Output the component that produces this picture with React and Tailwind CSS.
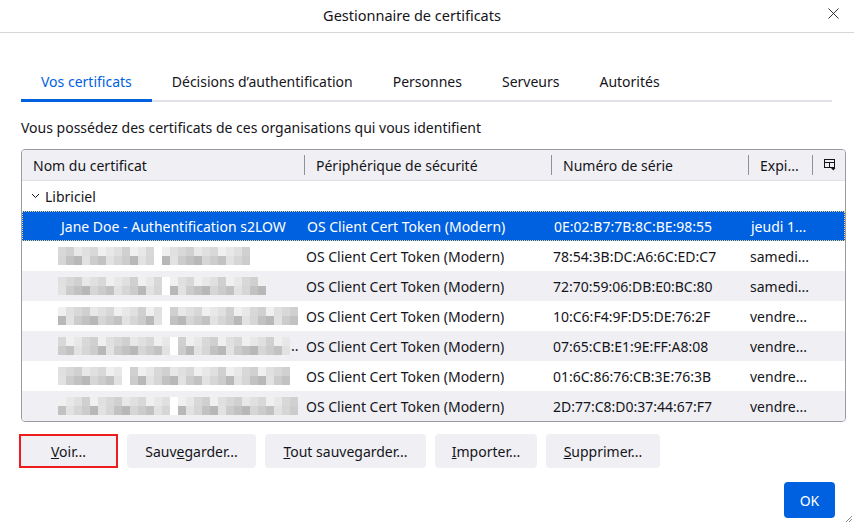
import { X } from "lucide-react"

const FONT = { fontFamily: '"Noto Sans", "Open Sans", sans-serif' }

const tabs = [
  "Vos certificats",
  "Décisions d’authentification",
  "Personnes",
  "Serveurs",
  "Autorités",
]

const rows = [
  { serial: "78:54:3B:DC:A6:6C:ED:C7", expires: "samedi...", width: 192, gap: 12, seed: 3 },
  { serial: "72:70:59:06:DB:E0:BC:80", expires: "samedi...", width: 208, gap: 13, seed: 7 },
  { serial: "10:C6:F4:9F:D5:DE:76:2F", expires: "vendre...", width: 240, gap: 13, seed: 11 },
  { serial: "07:65:CB:E1:9E:FF:A8:08", expires: "vendre...", width: 232, gap: 14, seed: 17, ellipsis: true },
  { serial: "01:6C:86:76:CB:3E:76:3B", expires: "vendre...", width: 232, gap: 8, seed: 23 },
  { serial: "2D:77:C8:D0:37:44:67:F7", expires: "vendre...", width: 240, gap: 14, seed: 29 },
]

const topShades = ["bg-[#f0f0f0]", "bg-[#e8e8e8]", "bg-[#e0e0e0]", "bg-[#d8d8d8]", "bg-[#d0d0d0]"]
const bottomShades = ["bg-[#e2e2e2]", "bg-[#d6d6d6]", "bg-[#cccccc]", "bg-[#c2c2c2]", "bg-[#b8b8b8]"]

// pixelated placeholder for a redacted certificate name
function Mosaic({ width, gap, seed }) {
  const cols = Math.floor(width / 8)
  return (
    <div className="flex flex-col">
      {[topShades, bottomShades].map((pal, r) => (
        <div key={r} className="flex h-[9px]">
          {Array.from({ length: cols }).map((_, c) => {
            const n = ((c + 5) * 31 + seed * 17 + r * 53) % 89
            const cls = c === gap ? "bg-white" : pal[n % pal.length]
            return <div key={c} className={`w-[8px] h-full ${cls}`} />
          })}
        </div>
      ))}
    </div>
  )
}

function HeaderCell({ children, width, last }) {
  return (
    <div className={`flex items-center h-full ${width}`}>
      <span className="pl-[11px] truncate flex-1">{children}</span>
      {!last && <span className="w-px h-[20px] bg-[#8f8f9d]" />}
    </div>
  )
}

function ColumnPicker() {
  return (
    <svg width="12" height="12" viewBox="0 0 12 12" fill="none" stroke="#15141a" strokeWidth="1">
      <rect x="0.5" y="0.5" width="10" height="8" />
      <line x1="0.5" y1="3.5" x2="10.5" y2="3.5" />
      <line x1="5.5" y1="3.5" x2="5.5" y2="8.5" />
      <path d="M7 9 L11.5 9 L9.25 11.5 Z" fill="#15141a" stroke="none" />
    </svg>
  )
}

function Btn({ children, width, focused }) {
  return (
    <button
      className={`h-[34px] ${width} flex items-center justify-center bg-[#f0f0f4] text-[14px] text-[#15141a] ${
        focused ? "border-2 border-[#ee1c1c]" : "rounded-[4px]"
      }`}
    >
      <span>{children}</span>
    </button>
  )
}

export default function App() {
  return (
    <div className="w-[854px] h-[524px] bg-white text-[#15141a] relative overflow-hidden" style={FONT}>
      <div className="h-[33px] flex items-center justify-center pr-[30px] relative border-b border-[#d6d6d6]">
        <span className="text-[14.5px]">Gestionnaire de certificats</span>
        <X size={19} strokeWidth={1.1} className="absolute right-[11px] top-[4px]" />
      </div>

      <div className="px-[21px]">
        <div className="mt-[35px] flex w-[811px] border-b-2 border-[#e0e0e6]">
          {tabs.map((t, i) => (
            <div
              key={t}
              className={`px-[20px] h-[34px] pt-[3px] -mb-[2px] flex items-start text-[14px] ${
                i === 0 ? "text-[#0061e0] border-b-[3px] border-[#0061e0]" : "border-b-[3px] border-transparent"
              }`}
            >
              {t}
            </div>
          ))}
        </div>

        <p className="mt-[16px] text-[14px] leading-[20px]">
          Vous possédez des certificats de ces organisations qui vous identifient
        </p>

        <div className="mt-[11px] w-[825px] border border-[#9a9aa5] rounded-[4px] overflow-hidden text-[14px]">
          <div className="h-[31px] flex items-center bg-[#f0f0f4] border-b border-[#e0e0e6]">
            <HeaderCell width="w-[283px]">Nom du certificat</HeaderCell>
            <HeaderCell width="w-[247px]">Périphérique de sécurité</HeaderCell>
            <HeaderCell width="w-[197px]">Numéro de série</HeaderCell>
            <HeaderCell width="w-[64px]">Expi...</HeaderCell>
            <div className="flex-1 flex justify-center pl-[1px]">
              <ColumnPicker />
            </div>
          </div>

          <div className="h-[30px] flex items-center">
            <svg width="9" height="6" viewBox="0 0 9 6" className="ml-[9px] mr-[5px]" fill="none" stroke="#15141a" strokeWidth="1">
              <path d="M1 1 L4.5 4.5 L8 1" />
            </svg>
            <span>Libriciel</span>
          </div>

          <div className="h-[30px] flex items-center bg-[#0061e0] text-white border border-dotted border-[#f7d774]">
            <span className="w-[282px] pl-[38px] truncate">Jane Doe - Authentification s2LOW</span>
            <span className="w-[247px] pl-[2px]">OS Client Cert Token (Modern)</span>
            <span className="w-[197px] pl-[2px]">0E:02:B7:7B:8C:BE:98:55</span>
            <span className="pl-[2px]">jeudi 1...</span>
          </div>

          {rows.map((r, i) => (
            <div key={r.serial} className={`h-[30px] flex items-center ${i % 2 === 1 ? "bg-[#f0f0f4]" : "bg-white"}`}>
              <div className="w-[283px] pl-[36px] flex items-center">
                <Mosaic width={r.width} gap={r.gap} seed={r.seed} />
                {r.ellipsis && <span className="text-[#15141a] ml-[1px] -mt-[2px]">..</span>}
              </div>
              <span className="w-[247px] pl-[1px]">OS Client Cert Token (Modern)</span>
              <span className="w-[197px] pl-[1px]">{r.serial}</span>
              <span className="pl-[1px]">{r.expires}</span>
            </div>
          ))}
        </div>
      </div>

      <div className="mt-[12px] pl-[19px] flex gap-[9px]">
        <Btn width="w-[99px]" focused>
          <u>V</u>oir...
        </Btn>
        <Btn width="w-[129px]">
          Sauv<u>e</u>garder...
        </Btn>
        <Btn width="w-[161px]">
          <u>T</u>out sauvegarder...
        </Btn>
        <Btn width="w-[102px]">
          <u>I</u>mporter...
        </Btn>
        <Btn width="w-[114px]">
          <u>S</u>upprimer...
        </Btn>
      </div>

      <div className="mt-[14px] pr-[19px] flex justify-end">
        <button className="h-[36px] w-[51px] rounded-[4px] bg-[#0061e0] text-white text-[14px]">OK</button>
      </div>

      <svg width="8" height="8" viewBox="0 0 8 8" className="absolute right-[1px] bottom-[1px]" stroke="#8a8a8a" strokeWidth="1">
        <line x1="7" y1="1" x2="1" y2="7" />
        <line x1="7" y1="4" x2="4" y2="7" />
      </svg>
    </div>
  )
}
